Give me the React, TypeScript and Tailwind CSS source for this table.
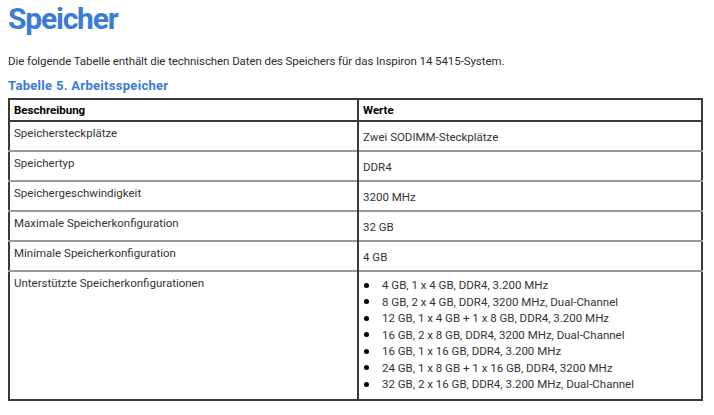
import React from "react";

const rows: [string, string][] = [
  ["Speichersteckplätze", "Zwei SODIMM-Steckplätze"],
  ["Speichertyp", "DDR4"],
  ["Speichergeschwindigkeit", "3200 MHz"],
  ["Maximale Speicherkonfiguration", "32 GB"],
  ["Minimale Speicherkonfiguration", "4 GB"],
];

const configs = [
  "4 GB, 1 x 4 GB, DDR4, 3.200 MHz",
  "8 GB, 2 x 4 GB, DDR4, 3200 MHz, Dual-Channel",
  "12 GB, 1 x 4 GB + 1 x 8 GB, DDR4, 3.200 MHz",
  "16 GB, 2 x 8 GB, DDR4, 3200 MHz, Dual-Channel",
  "16 GB, 1 x 16 GB, DDR4, 3.200 MHz",
  "24 GB, 1 x 8 GB + 1 x 16 GB, DDR4, 3200 MHz",
  "32 GB, 2 x 16 GB, DDR4, 3.200 MHz, Dual-Channel",
];

export default function App() {
  return (
    <div className="w-[714px] h-[415px] bg-white text-[#333] pl-2 pr-[11px] pt-[1px] font-['Roboto',sans-serif]">
      <h1 className="text-[30px] leading-[36px] font-bold text-[#3a7bd5] tracking-[-1.2px]">Speicher</h1>
      <p className="mt-[17px] text-[11.5px] leading-[14px] text-[#2d2d2d] tracking-[-0.08px]">
        Die folgende Tabelle enthält die technischen Daten des Speichers für das Inspiron 14 5415-System.
      </p>
      <h2 className="mt-[11px] text-[13px] leading-[14px] font-bold text-[#3a7bd5] tracking-[0.3px]">Tabelle 5. Arbeitsspeicher</h2>
      <table className="mt-[5px] w-[695px] border-collapse border-2 border-[#3a3a3a] text-[11.5px] leading-[16px]">
        <thead>
          <tr className="h-[22px] border-b-2 border-[#3a3a3a]">
            <th className="w-[349px] border-r-2 border-[#3a3a3a] pl-[4px] text-left font-bold text-black align-middle">Beschreibung</th>
            <th className="pl-[4px] text-left font-bold text-black align-middle">Werte</th>
          </tr>
        </thead>
        <tbody>
          {rows.map(([a, b]) => (
            <tr key={a} className="h-[30px] border-b-2 border-[#999]">
              <td className="border-r-2 border-[#3a3a3a] pl-[4px] pt-[3px] align-top">{a}</td>
              <td className="pl-[4px] pt-[7px] align-top">{b}</td>
            </tr>
          ))}
          <tr>
            <td className="border-r-2 border-[#3a3a3a] pl-[4px] pt-[3px] align-top">Unterstützte Speicherkonfigurationen</td>
            <td className="pl-[4px] pt-[5px] pb-[6px] align-top">
              <ul>
                {configs.map((c, i) => (
                  <li key={i} className="flex h-[16.5px] items-center">
                    <span className="w-[5px] h-[5px] rounded-full bg-black ml-[1px] mr-[13px]" />
                    <span>{c}</span>
                  </li>
                ))}
              </ul>
            </td>
          </tr>
        </tbody>
      </table>
    </div>
  );
}
